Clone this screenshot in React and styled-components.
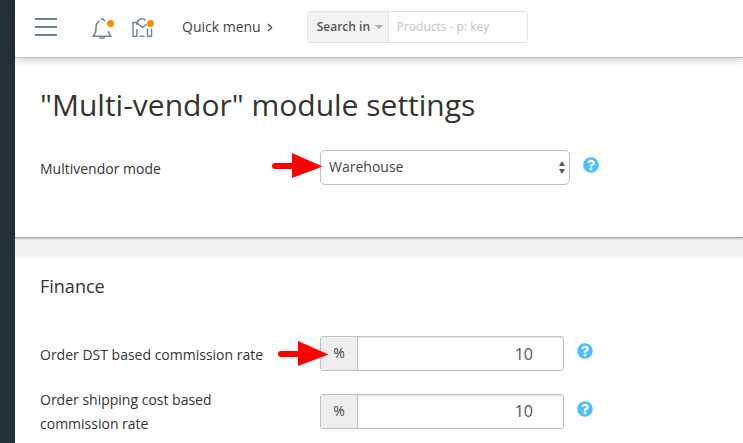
import React from "react";
import styled, { createGlobalStyle } from "styled-components";
import { FaQuestionCircle } from "react-icons/fa";

const GlobalStyle = createGlobalStyle`
  *, *::before, *::after { box-sizing: border-box; }
  body {
    margin: 0;
    background: #f2f2f2;
    color: #333;
    font: 14px/24px "Open Sans", sans-serif;
  }
  button, input, select { font: inherit; color: inherit; }
`;

const Page = styled.div`
  min-height: 100vh;
  display: flex;
  flex-direction: column;
  overflow: hidden;
  background: linear-gradient(to right, #233238 15px, #f2f2f2 15px);
`;

const Header = styled.header`
  position: relative;
  z-index: 1;
  margin-left: 15px;
  height: 58px;
  padding: 0 20px 3px;
  display: flex;
  align-items: center;
  background: #fff;
  border-bottom: 1px solid #b9bdba;
  box-shadow: 0 2px 8px rgba(0, 0, 0, 0.2);
`;

const IconButton = styled.button`
  display: flex;
  padding: 0;
  border: 0;
  background: none;
  cursor: pointer;
  margin-right: ${(p) => p.$gap}px;
`;

const QuickMenu = styled.button`
  display: flex;
  align-items: center;
  gap: 6px;
  padding: 0;
  margin-right: 34px;
  border: 0;
  background: none;
  color: #444;
  white-space: nowrap;
`;

const Search = styled.form`
  display: flex;
  height: 32px;
  border: 1px solid #e4e4e4;
  border-radius: 3px;
  overflow: hidden;
  font-size: 12px;
`;

const SearchScope = styled.button`
  display: flex;
  align-items: center;
  gap: 5px;
  width: 81px;
  padding: 0 0 0 9px;
  border: 0;
  border-right: 1px solid #e4e4e4;
  background: #f3f3f3;
  color: #555;
  font-weight: 600;
  white-space: nowrap;
`;

const SearchInput = styled.input`
  width: 138px;
  min-width: 0;
  padding: 0 8px;
  border: 0;
  outline: 0;
  &::placeholder { color: #c4c4c4; opacity: 1; }
`;

const Panel = styled.section`
  margin-left: 15px;
  padding: 0 25px;
  background: #fff;
`;

const ModulePanel = styled(Panel)`
  padding-top: 27px;
  padding-bottom: 52px;
  margin-bottom: 19px;
  border-bottom: 1px solid #a5a5a5;
  box-shadow: 0 1px 2px rgba(0, 0, 0, 0.2);
`;

const FinancePanel = styled(Panel)`
  flex: 1;
  padding-top: 17px;
`;

const Title = styled.h1`
  margin: 0 0 25px;
  font-size: 30px;
  line-height: 40px;
  font-weight: 400;
`;

const Subtitle = styled.h2`
  margin: 0 0 38px;
  font-size: 18px;
  line-height: 24px;
  font-weight: 400;
`;

const Row = styled.div`
  display: grid;
  grid-template-columns: 240px minmax(0, 1fr);
  column-gap: 40px;
  align-items: center;

  & + & {
    margin-top: 15px;
  }
`;

const Label = styled.label`
  padding-top: 2px;
`;

const Control = styled.div`
  position: relative;
  display: flex;
  align-items: flex-start;
`;

const SelectBox = styled.div`
  position: relative;
  width: 250px;
`;

const Select = styled.select`
  display: block;
  width: 100%;
  height: 35px;
  padding: 0 24px 2px 8px;
  appearance: none;
  border: 1px solid #bfbfbf;
  border-radius: 5px;
  background: #fff;
  color: #444;
`;

const Spinner = styled.svg`
  position: absolute;
  right: 5px;
  top: 11px;
  pointer-events: none;
`;

const InputGroup = styled.div`
  display: flex;
  width: 244px;
  height: 35px;
  border: 1px solid #bfbfbf;
  border-radius: 3px;
  overflow: hidden;
`;

const Unit = styled.span`
  flex: 0 0 37px;
  border-right: 1px solid #bfbfbf;
  background: #eee;
  color: #444;
  line-height: 32px;
  text-align: center;
`;

const RateInput = styled.input`
  flex: 1;
  min-width: 0;
  padding: 0 30px 0 8px;
  border: 0;
  outline: 0;
  box-shadow: inset 0 1px 2px rgba(0, 0, 0, 0.1);
  color: #555;
  font-size: 16px;
  text-align: right;
`;

const Help = styled.button`
  display: flex;
  margin: 7px 0 0 13px;
  padding: 0;
  border: 0;
  background: none;
  color: #4bbfff;
  cursor: help;
`;

const Pointer = styled.svg`
  position: absolute;
  z-index: 1;
  left: ${(p) => p.$left}px;
  top: ${(p) => p.$top}px;
  pointer-events: none;
`;

function Arrow({ left, top }) {
  return (
    <Pointer $left={left} $top={top} width="51" height="25" viewBox="0 0 51 25" aria-hidden="true">
      <path d="M3 13H24" stroke="#f00" strokeWidth="6" strokeLinecap="round" />
      <path d="M20 0L50.500 13.500L20 25Z" fill="#f00" />
    </Pointer>
  );
}

function HelpButton({ label }) {
  return (
    <Help type="button" aria-label={label}>
      <FaQuestionCircle size={16} />
    </Help>
  );
}

function RateField({ id, label, pointer }) {
  return (
    <Row>
      <Label htmlFor={id}>{label}</Label>
      <Control>
        <InputGroup>
          <Unit>%</Unit>
          <RateInput id={id} defaultValue="10" inputMode="decimal" />
        </InputGroup>
        {pointer && <Arrow left={-42} top={5} />}
        <HelpButton label={"Help: " + label} />
      </Control>
    </Row>
  );
}

export default function App() {
  return (
    <>
      <GlobalStyle />
      <Page>
        <Header>
          <IconButton type="button" aria-label="Menu" $gap={35}>
            <svg width="22" height="18" viewBox="0 0 22 18" fill="#678591">
              <path d="M0 0h22v2H0zM0 8h22v2H0zM0 16h22v2H0z" />
            </svg>
          </IconButton>
          <IconButton type="button" aria-label="Notifications" $gap={16}>
            <svg width="24" height="24" viewBox="0 -2 24 24" fill="none" stroke="#6f8b97" strokeWidth="1.600">
              <path d="M7.500 4C5.200 5.200 4 7.500 4 11c0 4-.8 6-2.800 8.300h17.600c-1.200-1.500-2-3-2.400-5.200M9 2.500l1.600-.7L13 4" />
              <path d="M7 19.500c1 2.300 5 2.300 6 0" />
              <circle cx="18.500" cy="6.500" r="3.500" fill="#ff8c00" stroke="none" />
            </svg>
          </IconButton>
          <IconButton type="button" aria-label="Marketplace" $gap={26}>
            <svg width="24" height="24" viewBox="0 -2 24 24" fill="none" stroke="#6f8b97" strokeWidth="1.500">
              <path d="M5 12v7.300H1V5.500h3.500V8M15.500 11.500v7.800h4V11.500M7.500 19.300h5M4.500 7.500C5.500 1 11.500.500 13.500 3.500M5 5.800L10.500 10.500 14.500 7" />
              <circle cx="18.500" cy="6.500" r="3.500" fill="#ff8c00" stroke="none" />
            </svg>
          </IconButton>
          <QuickMenu type="button">
            Quick menu
            <svg width="6" height="9" viewBox="0 0 6 9" fill="none" stroke="#444" strokeWidth="1.200">
              <path d="M1 1l3.700 3.500L1 8" />
            </svg>
          </QuickMenu>
          <Search>
            <SearchScope type="button">
              Search in
              <svg width="8" height="4" viewBox="0 0 8 4" fill="#aaa"><path d="M0 0h8L4 4z" /></svg>
            </SearchScope>
            <SearchInput aria-label="Search" placeholder="Products - p: key" />
          </Search>
        </Header>
        <ModulePanel>
          <Title>"Multi-vendor" module settings</Title>
          <Row>
            <Label htmlFor="mode">Multivendor mode</Label>
            <Control>
              <SelectBox>
                <Select id="mode" defaultValue="Warehouse">
                  <option>Warehouse</option>
                </Select>
                <Spinner width="6" height="13" viewBox="0 0 6 13" fill="#555" aria-hidden="true">
                  <path d="M0 5L3 0l3 5zM0 8h6l-3 5z" />
                </Spinner>
              </SelectBox>
              <Arrow left={-48} top={3} />
              <HelpButton label="Help: Multivendor mode" />
            </Control>
          </Row>
        </ModulePanel>
        <FinancePanel>
          <Subtitle>Finance</Subtitle>
          <RateField id="dst" label="Order DST based commission rate" pointer />
          <RateField id="shipping" label="Order shipping cost based commission rate" />
        </FinancePanel>
      </Page>
    </>
  );
}
